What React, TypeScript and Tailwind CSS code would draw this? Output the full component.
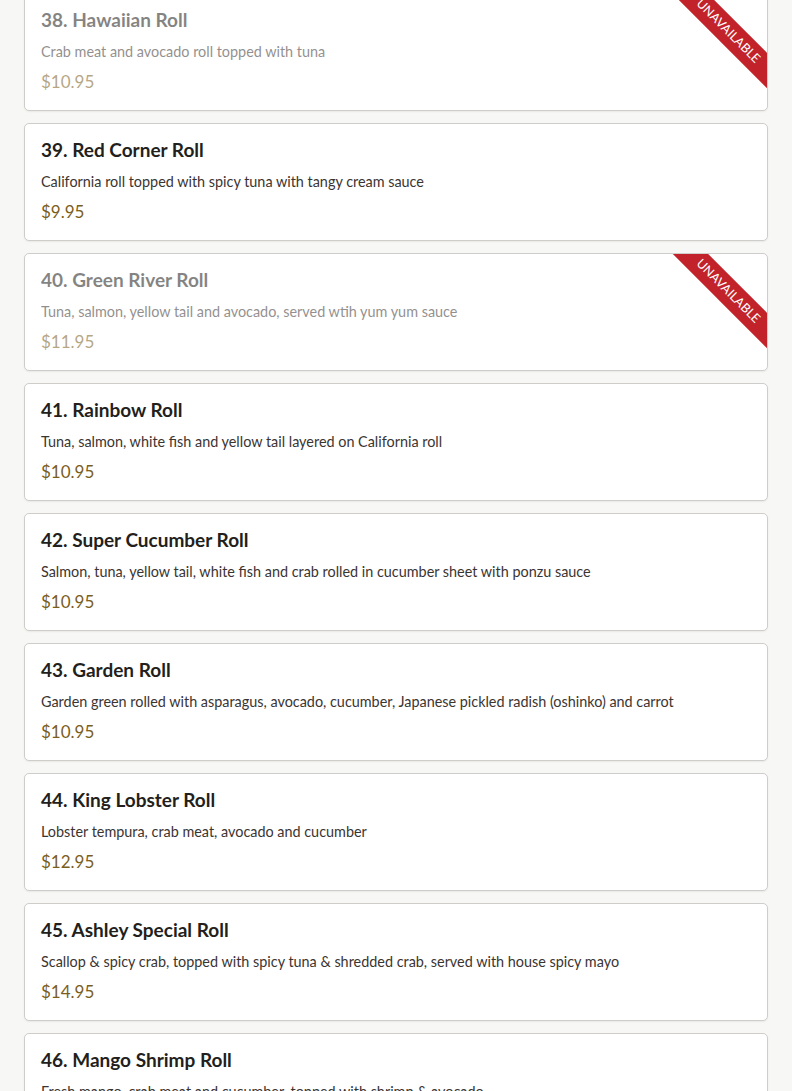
import React from "react";

type Item = { n: number; name: string; desc: string; price: string; unavailable?: boolean };

const items: Item[] = [
  { n: 38, name: "Hawaiian Roll", desc: "Crab meat and avocado roll topped with tuna", price: "$10.95", unavailable: true },
  { n: 39, name: "Red Corner Roll", desc: "California roll topped with spicy tuna with tangy cream sauce", price: "$9.95" },
  { n: 40, name: "Green River Roll", desc: "Tuna, salmon, yellow tail and avocado, served wtih yum yum sauce", price: "$11.95", unavailable: true },
  { n: 41, name: "Rainbow Roll", desc: "Tuna, salmon, white fish and yellow tail layered on California roll", price: "$10.95" },
  { n: 42, name: "Super Cucumber Roll", desc: "Salmon, tuna, yellow tail, white fish and crab rolled in cucumber sheet with ponzu sauce", price: "$10.95" },
  { n: 43, name: "Garden Roll", desc: "Garden green rolled with asparagus, avocado, cucumber, Japanese pickled radish (oshinko) and carrot", price: "$10.95" },
  { n: 44, name: "King Lobster Roll", desc: "Lobster tempura, crab meat, avocado and cucumber", price: "$12.95" },
  { n: 45, name: "Ashley Special Roll", desc: "Scallop & spicy crab, topped with spicy tuna & shredded crab, served with house spicy mayo", price: "$14.95" },
  { n: 46, name: "Mango Shrimp Roll", desc: "Fresh mango, crab meat and cucumber, topped with shrimp & avocado", price: "$12.95" },
];

function Card({ item }: { item: Item }) {
  const u = item.unavailable;
  return (
    <div className="relative h-[118px] overflow-hidden rounded-[5px] border border-[#cfcdc9] bg-white px-4 pt-[14px] pb-4 shadow-[0_1px_2px_rgba(0,0,0,0.06)]">
      <div className={u ? "opacity-55" : ""}>
        <div className="text-[19px] leading-6 font-bold text-[#231f1c]">
          {item.n}. {item.name}
        </div>
        <div className="mt-[10px] text-[14.4px] leading-5 text-[#3b3532] whitespace-nowrap">{item.desc}</div>
        <div className="mt-2 text-[17px] leading-6 text-[#7b5e1c]">{item.price}</div>
      </div>
      {u && (
        <div className="absolute top-[25px] right-[-31px] flex h-[25px] w-[140px] rotate-45 items-center justify-center bg-[#c2232a] text-[12.5px] font-normal uppercase tracking-[0.01em] text-white">
          Unavailable
        </div>
      )}
    </div>
  );
}

export default function App() {
  return (
    <div className="min-h-screen overflow-hidden bg-[#f7f7f5]" style={{ fontFamily: "Lato, 'Noto Sans', sans-serif" }}>
      <div className="-mt-[7px] flex flex-col gap-3 px-6">
        {items.map((it) => (
          <Card key={it.n} item={it} />
        ))}
      </div>
    </div>
  );
}
